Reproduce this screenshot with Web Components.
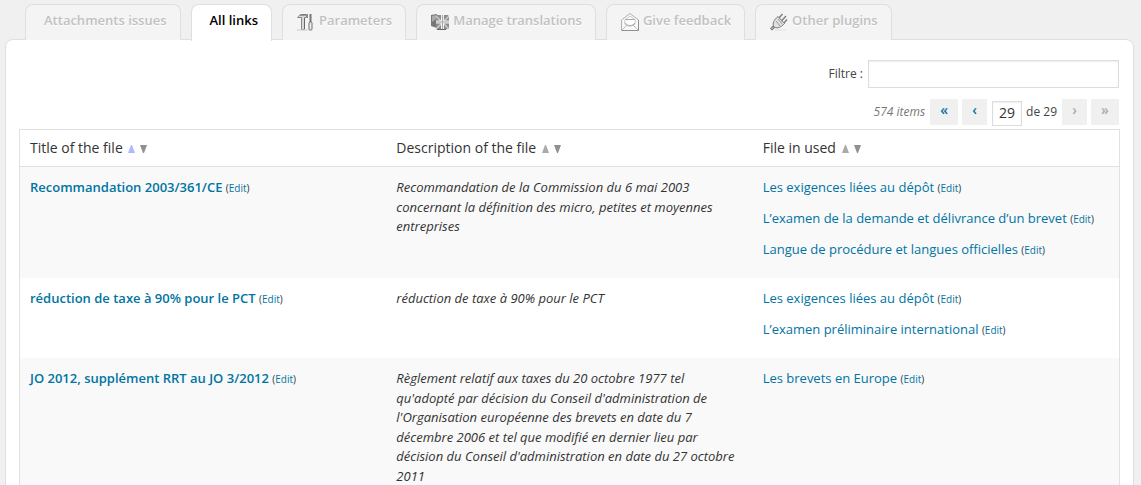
<!DOCTYPE html>
<html lang="en">
<head>
<meta charset="utf-8">
<title>All links</title>
<style>
  body { margin: 0; background: #f0f0f0; color: #444; font: 13px/20px "Open Sans", "Noto Sans", sans-serif; overflow: hidden; height: 100vh; }
</style>
</head>
<body>
<links-app></links-app>
<script>
const define = (name, html, setup) => {
  const template = document.createElement('template');
  template.innerHTML = html;
  customElements.define(name, class extends HTMLElement {
    constructor() {
      super();
      this.attachShadow({ mode: 'open' }).append(template.content.cloneNode(true));
    }
    connectedCallback() { if (setup) setup(this, this.shadowRoot); }
  });
};

const icons = {
  tools: '<path d="M0.500 4.500C2 2 4 1.500 9.500 1.500v3h-2v12h-3v-12H3z" fill="#d8d8d8" stroke="#888"/><path d="M3 2h6" stroke="#666"/><path d="M7.500 5v11" stroke="#666"/><path d="M10.500 1v4" stroke="#888"/><path d="M13.500 1v8" stroke="#777" stroke-width="2"/><rect x="12" y="9" width="3" height="8" rx="1" fill="#eee" stroke="#707070"/><path d="M0 17h11" stroke="#ccc"/>',
  flags: '<path d="M0 2l6-1v14l-6-2z" fill="#777"/><path d="M1 3l4-1v4l-4 3z" fill="#aaa"/><path d="M5 2h12l1 2v11l-4 2-9-1z" fill="#8c8c8c"/><path d="M5 3l13 13M18 3L5 16" stroke="#ccc" stroke-width="1.500"/><path d="M11.500 2v15M5 9h13" stroke="#f0f0f0" stroke-width="3"/><path d="M11.500 2v15M5 9h13" stroke="#aaa"/><path d="M6 16.500h9" stroke="#666"/>',
  mail: '<path d="M0.500 7L9 .5 17.500 7v10.500H.5z" fill="#f8f8f8" stroke="#b0b0b0"/><path d="M3.500 7.500L9 3l5.500 4.500-1 4-3 1.500H7l-3-1.500z" fill="#fff" stroke="#c8c8c8"/><path d="M4 6.500h10M4 10c2 2 3 2.500 5 2.500s4-1 5-2.500" stroke="#aaa"/><path d="M1 17l5-5M17 17l-5-5" stroke="#bbb"/><path d="M17.500 7v10.500H1" stroke="#909090"/>',
  plug: '<path d="M1 16.500l4-4" stroke="#777" stroke-width="3"/><path d="M1.500 16l4-4" stroke="#ccc"/><path d="M4 14C2 10 4 7 8 3.500l6.500 7C11 14 8 16 4 14z" fill="#e2e2e2" stroke="#777"/><path d="M6 8l4 5M8 6l4 5" stroke="#999"/><path d="M9 5l3.500-4M11.500 8L16 3M14 10l3-3.500" stroke="#808080" stroke-width="1.500"/><path d="M5 17h11" stroke="#ddd"/>'
};

define('tab-item', `
<style>
  :host { display: block; }
  a { box-sizing: border-box; display: flex; align-items: flex-start; height: 36px; padding: 5px 13px 0 18px; border: 1px solid #dfdfdf; border-bottom: 0; border-radius: 8px 8px 0 0; background: #f4f4f4; color: #c1c1c1; font-weight: 600; text-decoration: none; text-shadow: 0 1px 0 #fff; white-space: nowrap; }
  :host([icon]) a { padding-left: 14px; gap: 4px; }
  :host([current]) a { height: 37px; background: #fff; color: #000; }
  svg { width: 18px; height: 18px; margin-top: 3px; }
  svg:empty { display: none; }
</style>
<a href="#"><svg viewBox="0 0 18 18" aria-hidden="true" fill="none"></svg><slot></slot></a>`,
(host, root) => { root.querySelector('svg').innerHTML = icons[host.getAttribute('icon')] || ''; });

define('tab-bar', `
<style>
  :host { display: flex; align-items: flex-start; gap: 10px; height: 36px; padding: 4px 0 0 25px; margin-bottom: -1px; position: relative; z-index: 1; }
</style><slot></slot>`);

define('list-filter', `
<style>
  :host { display: flex; justify-content: flex-end; align-items: center; gap: 5px; font-size: 12px; }
  input { box-sizing: border-box; width: 251px; height: 28px; margin: 0; border: 1px solid #ddd; background: #fff; box-shadow: inset 0 1px 2px rgba(0,0,0,.07); font: inherit; }
</style>
<label for="q">Filtre :</label><input id="q" type="text">`);

define('list-pager', `
<style>
  :host { display: flex; justify-content: flex-end; align-items: flex-start; font-size: 12px; line-height: 26px; }
  i { color: #777; margin-right: 5px; }
  button { height: 26px; width: 28px; padding: 0 0 4px; margin: 0; border: 0; background: #f0f0f0; color: #0074a2; font: 600 14px/20px "Open Sans", sans-serif; }
  button.step { width: 25px; }
  button:disabled { color: #aaa; }
  button + button { margin-left: 4px; }
  input { box-sizing: border-box; width: 30px; height: 25px; margin: 2px 4px 0 5px; padding: 0 0 3px; border: 1px solid #ddd; background: #fff; box-shadow: inset 0 1px 2px rgba(0,0,0,.07); color: #333; font: 14px/20px "Open Sans", sans-serif; text-align: center; }
  span { margin-right: 5px; }
</style>
<i>574 items</i><button aria-label="First page">«</button><button class="step" aria-label="Previous page">‹</button><input type="text" value="29" aria-label="Page"><span>de 29</span><button class="step" disabled aria-label="Next page">›</button><button disabled aria-label="Last page">»</button>`);

define('sort-arrows', `
<style>
  :host { display: inline-flex; gap: 5px; margin-left: 2px; }
  svg { width: 7px; height: 8px; }
  :host([active]) .up { fill: #b0b8ff; }
</style>
<svg class="up" viewBox="0 0 7 8" fill="#aaa" aria-hidden="true"><path d="M3 0h1l3 8H0z"/></svg><svg viewBox="0 0 7 8" fill="#909090" aria-hidden="true"><path d="M0 0h7L4 8H3z"/></svg>`);

define('edit-link', `
<style>
  :host { font-size: 10px; line-height: 10px; font-weight: 400; color: #333; }
  a { color: #0074a2; text-decoration: none; }
</style>(<a href="#">Edit</a>)`);

const rows = [
  ['Recommandation 2003/361/CE', 'Recommandation de la Commission du 6 mai 2003 concernant la définition des micro, petites et moyennes entreprises',
    ['Les exigences liées au dépôt', 'L’examen de la demande et délivrance d’un brevet', 'Langue de procédure et langues officielles']],
  ['réduction de taxe à 90% pour le PCT', 'réduction de taxe à 90% pour le PCT',
    ['Les exigences liées au dépôt', 'L’examen préliminaire international']],
  ['JO 2012, supplément RRT au JO 3/2012', "Règlement relatif aux taxes du 20 octobre 1977 tel qu'adopté par décision du Conseil d'administration de l'Organisation européenne des brevets en date du 7 décembre 2006 et tel que modifié en dernier lieu par décision du Conseil d'administration en date du 27 octobre 2011",
    ['Les brevets en Europe']]
];

define('links-table', `
<style>
  :host { display: block; }
  table { width: 100%; table-layout: fixed; border-collapse: separate; border-spacing: 0; border: 1px solid #e1e1e1; }
  th { padding: 8px 10px; border-bottom: 1px solid #e1e1e1; color: #333; font-weight: 400; font-size: 14px; line-height: 20px; text-align: left; }
  td { padding: 10px 10px 8px; vertical-align: top; }
  tbody tr:nth-child(odd) { background: #f9f9f9; }
  a { color: #0074a2; text-decoration: none; }
  td:first-child a { font-weight: 600; }
  .description { color: #333; font-style: italic; line-height: 1.5; padding-top: 11px; }
  p { margin: 0 0 11px; }
</style>
<table>
  <thead><tr><th scope="col">Title of the file <sort-arrows active></sort-arrows></th><th scope="col">Description of the file <sort-arrows></sort-arrows></th><th scope="col">File in used <sort-arrows></sort-arrows></th></tr></thead>
  <tbody>${rows.map(([title, text, uses]) => `<tr><td><a href="#">${title}</a> <edit-link></edit-link></td><td class="description">${text}</td><td>${uses.map(u => `<p><a href="#">${u}</a> <edit-link></edit-link></p>`).join('')}</td></tr>`).join('')}</tbody>
</table>`);

define('links-panel', `
<style>
  :host { display: block; margin: 0 7px 0 5px; padding: 20px 13px; border: 1px solid #dfdfdf; border-radius: 8px 8px 0 0; background: #fff; }
  list-filter { margin-right: 1px; }
  list-pager { margin: 11px 1px 3px 0; }
</style>
<list-filter></list-filter><list-pager></list-pager><links-table></links-table>`);

define('links-app', `
<style>:host { display: block; }</style>
<tab-bar>
  <tab-item>Attachments issues</tab-item><tab-item current>All links</tab-item><tab-item icon="tools">Parameters</tab-item><tab-item icon="flags">Manage translations</tab-item><tab-item icon="mail">Give feedback</tab-item><tab-item icon="plug">Other plugins</tab-item>
</tab-bar>
<links-panel></links-panel>`);
</script>
</body>
</html>
